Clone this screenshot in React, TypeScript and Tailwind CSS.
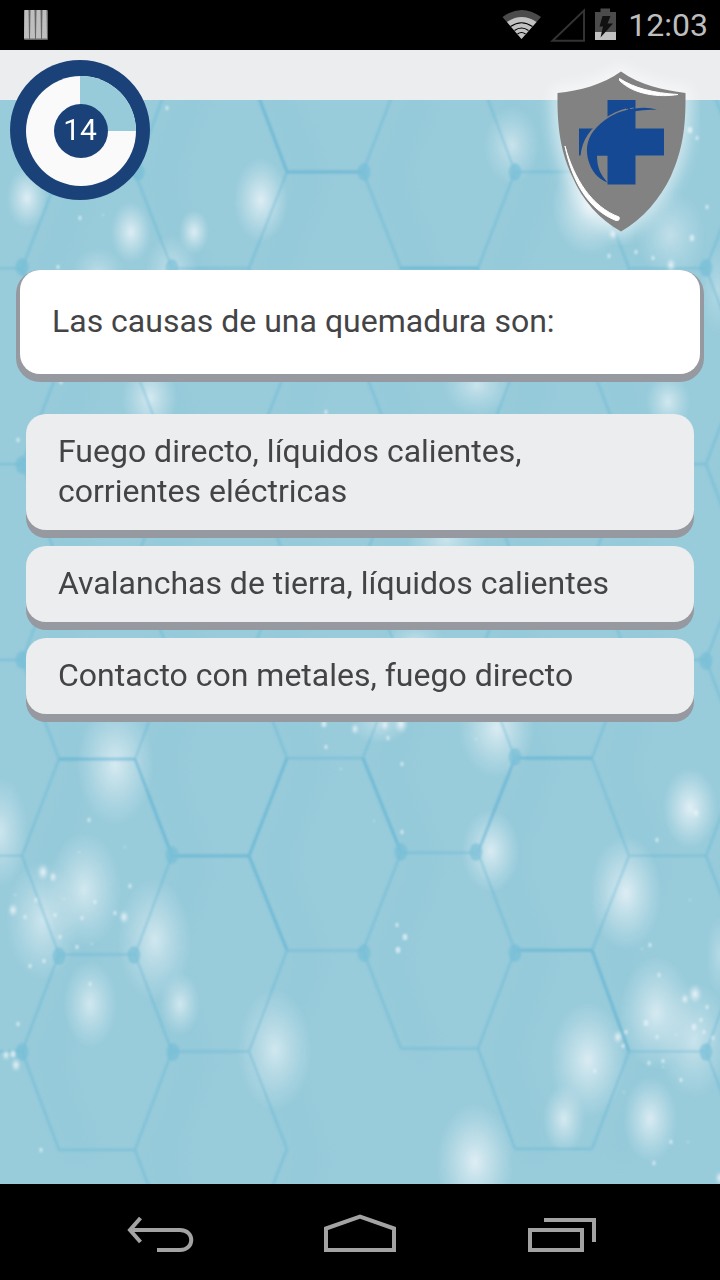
import React from 'react';

const rowA = (k: number, x: number) => -23.5 + 195.4 * k + (x < 200 ? 1 : k === 5 ? -3 : 0);
const rowB = (k: number, x: number) => 72.5 + 195.8 * k - (x > 300 && x < 500 && k > 3 ? 3 : 0);

const zigzags = [
  { a: 59, b: 22, end: 13 },
  { a: 135, b: 172, end: 15 },
  { a: 287, b: 249, end: 15 },
  { a: 363, b: 401, end: 12 },
  { a: 515, b: 478, end: 13 },
  { a: 592, b: 629, end: 13 },
  { a: 743, b: 706, end: 15 },
];

const zigzagPoints = zigzags.map(({ a, b, end }) =>
  Array.from({ length: end }, (_, i) =>
    i % 2 === 0 ? `${a},${rowA(i / 2, a)}` : `${b},${rowB((i - 1) / 2, b)}`,
  ).join(' '),
);

const flats: [number, number, number][] = [];
for (let k = 0; k < 7; k++) {
  flats.push([59, 135, rowA(k, 59)], [515, 592, rowA(k, 515)]);
  if (k < 6) flats.push([287, 363, rowA(k, 287)]);
}
for (let k = 0; k < 6; k++) {
  [[-20, 22], [172, 249], [401, 478], [629, 706]].forEach(([x1, x2]) => flats.push([x1, x2, rowB(k, x1)]));
}

const bold: [number, number, number, number][] = [
  [172, 856, 249, 856], [135, 759, 172, 856], [59, 759, 135, 759], [249, 856, 287, 758],
  [249, 856, 287, 950], [515, 950, 592, 950], [592, 950, 629, 1051], [515, 758, 592, 758],
  [363, 758, 401, 852], [287, 172, 260, 100], [287, 172, 363, 172], [401, 268, 478, 268],
  [478, 852, 515, 758],
];

const nodes = [
  [172, 268], [22, 267], [364, 172], [515, 172], [706, 268], [22, 660], [706, 661], [172, 855],
  [401, 852], [476, 852], [515, 757], [364, 953], [515, 953], [59, 956], [134, 955], [22, 1052],
  [173, 1052], [706, 1052], [22, 465], [138, 172],
];

const glows = [
  [27, 198, 20, 30, 0.75], [131, 232, 20, 30, 0.75], [194, 232, 15, 22, 0.75], [261, 200, 27, 42, 0.75],
  [512, 145, 28, 40, 0.5], [590, 205, 38, 50, 0.8], [670, 235, 35, 45, 0.4], [98, 272, 26, 24, 0.35],
  [172, 272, 26, 38, 0.45], [150, 398, 28, 38, 0.65], [477, 385, 34, 30, 0.5], [668, 402, 22, 28, 0.6],
  [446, 540, 40, 32, 0.5], [415, 640, 30, 20, 0.4], [497, 728, 38, 50, 0.7], [380, 724, 30, 20, 0.4],
  [115, 765, 39, 60, 0.65], [0, 832, 28, 55, 0.55], [84, 890, 37, 58, 0.6], [43, 920, 37, 60, 0.55],
  [155, 940, 37, 62, 0.6], [90, 1004, 27, 44, 0.6], [180, 1004, 20, 32, 0.6], [275, 1050, 37, 62, 0.6],
  [690, 808, 27, 40, 0.8], [491, 851, 29, 42, 0.7], [626, 893, 36, 58, 0.75], [656, 1013, 37, 57, 0.65],
  [694, 1040, 37, 58, 0.5], [588, 1060, 38, 58, 0.7], [564, 1119, 21, 34, 0.65], [650, 1119, 27, 43, 0.7],
  [475, 1162, 38, 58, 0.75], [720, 955, 14, 40, 0.3], [718, 290, 18, 45, 0.3],
];

const sparks = [
  [43, 872, 6], [53, 877, 4], [124, 917, 5], [13, 910, 5], [130, 886, 2], [115, 913, 2], [95, 902, 2],
  [89, 820, 2], [125, 847, 1], [79, 852, 1], [16, 1065, 5], [6, 1055, 4], [13, 1054, 3], [18, 1024, 2],
  [41, 1150, 2], [77, 947, 2], [92, 944, 1], [30, 966, 2], [44, 961, 2], [60, 937, 2], [25, 917, 2],
  [15, 895, 1], [36, 900, 2], [55, 915, 2], [64, 899, 1], [82, 918, 2], [90, 984, 2], [398, 950, 3],
  [405, 937, 3], [397, 925, 2], [402, 832, 2], [374, 821, 1], [402, 764, 2], [401, 724, 7], [385, 725, 4],
  [324, 724, 3], [355, 729, 4], [326, 747, 2], [341, 769, 1], [388, 738, 2], [476, 739, 1], [657, 840, 2],
  [690, 900, 1], [650, 945, 2], [642, 949, 1], [696, 813, 4], [695, 994, 7], [685, 999, 4], [707, 1007, 2],
  [618, 1037, 5], [626, 1032, 2], [623, 1046, 2], [657, 1037, 2], [663, 1061, 2], [663, 1067, 1],
  [649, 1063, 2], [659, 975, 2], [646, 1023, 3], [701, 1020, 2], [694, 1027, 3], [676, 1035, 1],
  [681, 1080, 2], [704, 1032, 2], [713, 1038, 2], [671, 1142, 2], [688, 1142, 1], [654, 1163, 2],
  [720, 1178, 5], [624, 1092, 1], [595, 1071, 2], [690, 130, 3], [697, 138, 2], [707, 207, 2], [692, 238, 3],
  [613, 234, 4], [671, 265, 5], [653, 258, 2], [609, 256, 2], [636, 252, 2], [167, 108, 2], [80, 218, 2],
  [103, 215, 1], [58, 267, 2], [18, 440, 2], [326, 412, 2], [61, 382, 2],
];

function Backdrop() {
  return (
    <svg
      aria-hidden="true"
      viewBox="0 100 720 1084"
      preserveAspectRatio="xMidYMid slice"
      className="absolute inset-0 h-full w-full"
    >
      <defs>
        <radialGradient id="glow">
          <stop offset="0" stopColor="#f0f6fa" />
          <stop offset="0.35" stopColor="#e8f2f7" stopOpacity="0.62" />
          <stop offset="0.75" stopColor="#e4f0f5" stopOpacity="0.22" />
          <stop offset="1" stopColor="#e4f0f5" stopOpacity="0" />
        </radialGradient>
        <filter id="haze" x="-20%" y="-20%" width="140%" height="140%">
          <feGaussianBlur stdDeviation="14" />
        </filter>
        <filter id="soft" filterUnits="userSpaceOnUse" x="-30" y="70" width="800" height="1150">
          <feGaussianBlur stdDeviation="0.8" />
        </filter>
      </defs>
      <rect x="-10" y="90" width="740" height="1110" fill="#99ccdb" />
      <g filter="url(#haze)" fill="none" stroke="#7fbfd3" strokeWidth="18" opacity="0.3" transform="translate(24 8)">
        {zigzagPoints.map((p) => (
          <polyline key={p} points={p} />
        ))}
      </g>
      <g filter="url(#soft)">
        {glows.map(([x, y, rx, ry, o]) => (
          <ellipse key={`${x}-${y}`} cx={x} cy={y} rx={rx} ry={ry} fill="url(#glow)" opacity={o} />
        ))}
        <g fill="none" stroke="#6fbad6" strokeWidth="2.6" opacity="0.55">
          {zigzagPoints.map((p) => (
            <polyline key={p} points={p} />
          ))}
          {flats.map(([x1, x2, y]) => (
            <path key={`${x1}-${y}`} d={`M${x1} ${y}H${x2}`} />
          ))}
        </g>
        <g fill="none" stroke="#62b3d4" strokeWidth="3" opacity="0.5">
          {bold.map(([x1, y1, x2, y2]) => (
            <path key={`${x1}-${y1}-${x2}-${y2}`} d={`M${x1} ${y1}L${x2} ${y2}`} />
          ))}
        </g>
        {nodes.map(([x, y]) => (
          <ellipse key={`${x}-${y}`} cx={x} cy={y} rx="6.5" ry="9" fill="#79bfd7" opacity="0.8" />
        ))}
        {glows.map(([x, y, rx, ry, o]) => (
          <ellipse key={`${x}-${y}`} cx={x} cy={y} rx={rx} ry={ry} fill="url(#glow)" opacity={o * 0.25} />
        ))}
        {sparks.map(([x, y, r]) => (
          <ellipse
            key={`${x}-${y}`}
            cx={x}
            cy={y}
            rx={r > 3 ? r : r * 0.8}
            ry={r > 3 ? r * 1.4 : r * 1.1}
            fill={r > 3 ? 'url(#glow)' : '#e3f2f7'}
            opacity={r > 3 ? 1 : 0.75}
          />
        ))}
      </g>
    </svg>
  );
}

function StatusBar() {
  return (
    <div className="flex h-[50px] shrink-0 items-center justify-between bg-black pr-3 pl-6">
      <svg aria-hidden="true" className="h-[30px] w-6" viewBox="0 0 24 30">
        <rect width="24" height="30" rx="1" fill="#666" />
        {[0, 6, 12, 18].map((x) => (
          <path key={x} d={`M${x + 0.5} 0h4l.5 28.5h-5z`} fill="#bfbfbf" />
        ))}
      </svg>
      <div className="flex items-center">
        <svg aria-hidden="true" className="h-[50px] w-[126px]" viewBox="502 0 126 50">
          <path d="M502.500 17Q521.500 3 541 17L521.500 39Z" fill="#4b4b4b" />
          <path d="M507 22Q521.500 12 536.500 22L521.500 39Z" fill="#c2c2c2" />
          <path
            d="M510.500 26.500Q521.500 19 532.500 26.500M514.500 30.500Q521.500 25.500 528.500 30.500M517.500 34Q521.500 31 525.500 34"
            fill="none"
            stroke="#000"
            strokeWidth="1.200"
          />
          <path d="M552.500 40.800H584V10.500Z" fill="none" stroke="#333" strokeWidth="2" />
          <path d="M595 12h5.500V8.500h9.500V12h6v28h-21z" fill="#4b4b4b" />
          <path d="M595 32h21v8h-21z" fill="#c2c2c2" />
          <path d="M602.500 16h8l-3 7.500h5.500l-12.500 14 2.500-11h-3.500z" fill="#111" />
        </svg>
        <time className="font-[Roboto,sans-serif] text-[32px] leading-10 text-[#bebebe]">12:03</time>
      </div>
    </div>
  );
}

function Timer() {
  return (
    <div role="timer" className="absolute top-[10px] left-[10px] flex size-[140px] items-center justify-center">
      <svg aria-hidden="true" className="absolute inset-0" viewBox="0 0 140 140">
        <circle cx="70" cy="70" r="70" fill="#1a4279" />
        <circle cx="71" cy="71" r="55" fill="#fafafa" />
        <path d="M70 71V16A55 55 0 0 1 126 71Z" fill="#98cbda" />
        <circle cx="71" cy="71" r="27" fill="#1a4279" />
      </svg>
      <span className="relative text-[30px] leading-8 text-white">14</span>
    </div>
  );
}

function Shield() {
  const outline =
    'M621 71.500C602 85 580 90.500 557.500 93C557 129 561 152 572 176C582 200 600 220 621 231.500C643 219 660 199 671 176C682 151 686 129 685.500 93C663 90 640 85 621 71.500Z';
  return (
    <svg
      role="img"
      aria-label="Escudo con cruz azul"
      className="absolute top-[5px] right-[15px] h-[190px] w-[170px]"
      viewBox="535 55 170 190"
    >
      <defs>
        <filter id="halo" filterUnits="userSpaceOnUse" x="540" y="55" width="160" height="190">
          <feGaussianBlur stdDeviation="7" />
        </filter>
        <filter id="edge">
          <feGaussianBlur stdDeviation="0.5" />
        </filter>
      </defs>
      <path d={outline} fill="#fff" stroke="#fff" strokeWidth="13" opacity="0.5" filter="url(#halo)" />
      <g filter="url(#edge)">
        <path d={outline} fill="#828282" />
        <path d="M619.500 78.500C634 88 653 93 678 94.500C660 97.500 634 95 619.500 80.500Z" fill="#fff" stroke="#fff" strokeWidth="1" />
        <path d="M565 146C574 179 592 207 619 217C620 219 619 221 616 220.500C589 210 572 182 565 146Z" fill="#fff" stroke="#fff" strokeWidth="1" />
        <path d="M607.500 100H635.500V128.500H664V155.500H635.500V184.500H607.500V155.500H579V128.500H607.500Z" fill="#164a93" />
        <path
          d="M626 108.500C618 110.500 611 114 606 117.500C590 128 582 140 580.500 156L590 158L600 122L606 122L626 110.500Z"
          fill="#828282"
        />
        <path d="M624 110.300C629 108.700 633 108 637 107.700" fill="none" stroke="#828282" strokeWidth="1" strokeDasharray="4 2" />
        <path
          d="M657 110C648 106.500 637 107.500 625 110.500C615 113 606 118 597 127C588 136 585 147 588 159C591 171 598 179 607.500 182.500C600 174 597 167 597 155.500H620V116C632 111 644 109 657 110Z"
          fill="#164a93"
        />
      </g>
    </svg>
  );
}

const answers = [
  'Fuego directo, líquidos calientes, corrientes eléctricas',
  'Avalanchas de tierra, líquidos calientes',
  'Contacto con metales, fuego directo',
];

function NavBar() {
  return (
    <nav className="flex h-24 shrink-0 items-center justify-center gap-[108px] bg-black text-[#a3a3a3]">
      <button type="button" aria-label="Atrás" className="h-24 w-24">
        <svg aria-hidden="true" viewBox="108 1184 96 96" fill="none" stroke="currentColor" strokeWidth="4">
          <path d="M140.500 1218L130 1230L140.500 1242M130 1230H180C195 1230 195 1250 180 1250H157" />
        </svg>
      </button>
      <button type="button" aria-label="Inicio" className="h-24 w-24">
        <svg aria-hidden="true" viewBox="312 1184 96 96" fill="none" stroke="currentColor" strokeWidth="4">
          <path d="M326 1250V1228.500L360 1216.500L394 1228.500V1250Z" />
        </svg>
      </button>
      <button type="button" aria-label="Recientes" className="h-24 w-24">
        <svg aria-hidden="true" viewBox="516 1184 96 96" fill="none" stroke="currentColor" strokeWidth="4">
          <path d="M530 1230H582V1250H530ZM544 1220H594V1242" />
        </svg>
      </button>
    </nav>
  );
}

export default function App() {
  return (
    <div className="flex min-h-screen flex-col bg-black font-[Roboto,sans-serif] text-[#444446]">
      <StatusBar />
      <header className="relative z-10 h-[50px] shrink-0 bg-[#ecedef]">
        <Timer />
        <Shield />
      </header>
      <main className="relative flex-1 overflow-hidden px-4 pt-[170px] pb-8">
        <Backdrop />
        <div className="relative rounded-3xl bg-[#96999f] px-1 pb-2">
          <h1 className="rounded-[20px] bg-white px-8 pt-[31px] pb-[33px] text-[32px] leading-10 font-normal">
            Las causas de una quemadura son:
          </h1>
        </div>
        <div className="relative mt-8 flex flex-col gap-4 px-[10px]">
          {answers.map((answer) => (
            <button
              key={answer}
              type="button"
              className="rounded-[20px] bg-[#ecedef] px-8 pt-[17px] pb-[19px] text-left text-[32px] leading-10 shadow-[0_8px_0_#96999f]"
            >
              {answer}
            </button>
          ))}
        </div>
      </main>
      <NavBar />
    </div>
  );
}
